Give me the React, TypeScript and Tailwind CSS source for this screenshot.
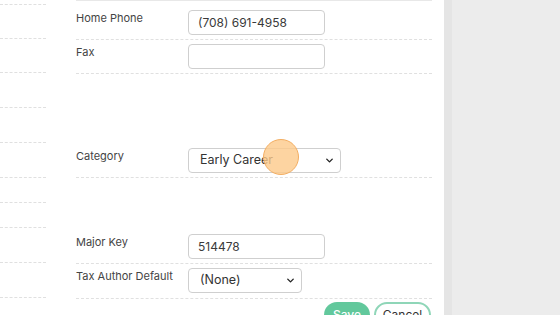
import { ChevronDown } from 'lucide-react';

const leftRows = [5, 34, 34, 35, 35, 35, 25, 25, 35, 35];

function Field({ value, width }: { value?: string; width: string }) {
  return (
    <div className={`${width} h-[25px] rounded-[4px] border border-[#cfcfcf] bg-white px-[9px] flex items-center text-[12px] text-[#3a3a3a]`}>
      {value}
    </div>
  );
}

function Select({ value, width }: { value: string; width: string }) {
  return (
    <div className={`${width} h-[25px] rounded-[4px] border border-[#cfcfcf] bg-white pl-[11px] pr-[5px] flex items-center justify-between text-[12.5px] text-[#333]`}>
      <span>{value}</span>
      <ChevronDown className="w-[11px] h-[11px] text-[#222]" strokeWidth={3} />
    </div>
  );
}

function Row({ label, height, pt, children }: { label: string; height: string; pt: string; children?: React.ReactNode }) {
  return (
    <div className={`${height} ${pt} shrink-0 flex items-start border-b border-dashed border-[#e0e0e0]`}>
      <div className="w-[112px] pt-[1px] text-[11px] leading-[14px] text-[#444]">{label}</div>
      {children}
    </div>
  );
}

export default function App() {
  return (
    <div className="w-[560px] h-[315px] overflow-hidden flex bg-[#ececec]" style={{ fontFamily: 'Inter, "Open Sans", sans-serif' }}>
      {/* main white panel */}
      <div className="relative w-[444px] h-full bg-white flex shrink-0 overflow-hidden">
        {/* left column rules */}
        <div className="w-[46px] flex flex-col">
          {leftRows.map((h, i) => (
            <div key={i} className="shrink-0 border-b border-dashed border-[#e0e0e0]" style={{ height: h }} />
          ))}
        </div>

        {/* form column */}
        <div className="ml-[30px] w-[356px] flex flex-col">
          <div className="h-px shrink-0 bg-[#e8e8e8]" />
          <Row label="Home Phone" height="h-[39px]" pt="pt-[9px]">
            <Field value="(708) 691-4958" width="w-[137px]" />
          </Row>
          <Row label="Fax" height="h-[34px]" pt="pt-[4px]">
            <Field width="w-[137px]" />
          </Row>
          <Row label="Category" height="h-[104px]" pt="pt-[74px]">
            <Select value="Early Career" width="w-[153px]" />
          </Row>
          <Row label="Major Key" height="h-[86px]" pt="pt-[56px]">
            <Field value="514478" width="w-[137px]" />
          </Row>
          <Row label="Tax Author Default" height="h-[35px]" pt="pt-[4px]">
            <Select value="(None)" width="w-[114px]" />
          </Row>
          <div className="shrink-0 flex justify-end gap-[4px] pt-[3px] pr-[1px]">
            <button className="h-[26px] w-[46px] rounded-full bg-[#62c89c] text-white text-[12px] font-medium">Save</button>
            <button className="h-[26px] w-[57px] rounded-full border-2 border-[#8fd6b8] bg-white text-[#333] text-[12px]">Cancel</button>
          </div>
        </div>

        {/* click highlight */}
        <div className="absolute left-[263px] top-[139px] w-[36px] h-[36px] rounded-full bg-[#fdc98a]/80 border border-[#f3ae62]" />
      </div>
      <div className="w-[8px] h-full bg-[#e5e5e5]" />
      <div className="flex-1" />
    </div>
  );
}
